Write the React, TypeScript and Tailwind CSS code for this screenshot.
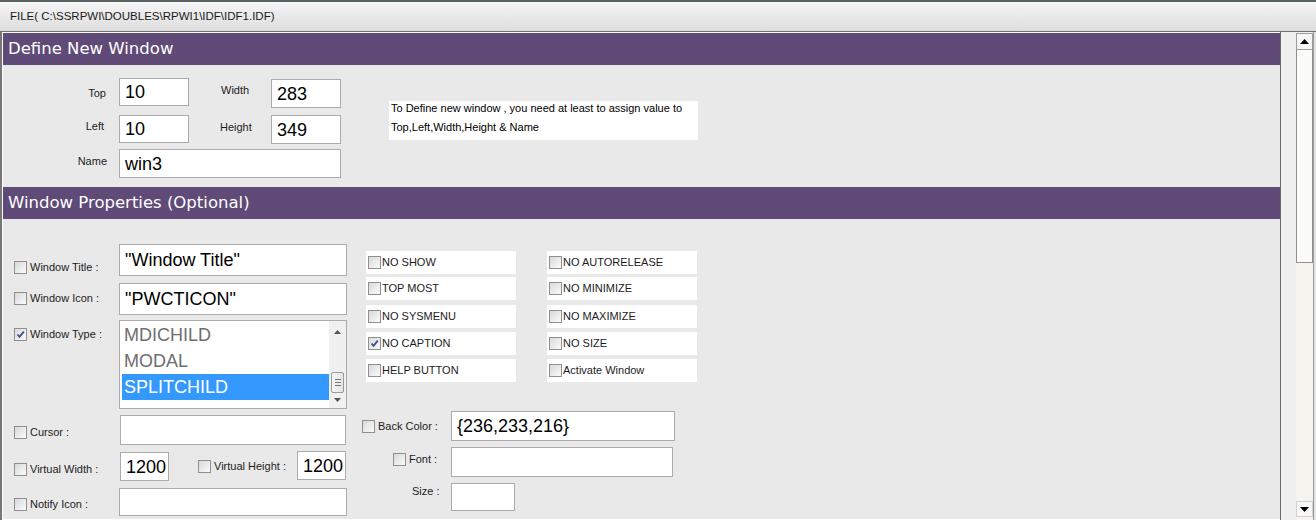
import React from 'react';

const SANS = "font-['Liberation_Sans',Arial,sans-serif]";

function Check({ checked = false }: { checked?: boolean }) {
  return (
    <span className="relative inline-block w-[13px] h-[13px] shrink-0 border border-[#8e8f8f] bg-gradient-to-br from-[#d9d9d9] to-[#fbfbfb]">
      {checked && (
        <svg viewBox="0 0 11 11" className="absolute inset-0 w-[11px] h-[11px]">
          <path d="M2.5 5.5 L4.5 7.8 L8.8 2.6" fill="none" stroke="#3f5490" strokeWidth="1.9" />
        </svg>
      )}
    </span>
  );
}

function Box({ className = '', children }: { className?: string; children?: React.ReactNode }) {
  return (
    <div className={`bg-white border border-[#ababab] flex items-center pl-[5px] text-[18px] text-black leading-none ${className}`}>
      {children}
    </div>
  );
}

function CheckLabel({ label, checked, tight = false }: { label: string; checked?: boolean; tight?: boolean }) {
  return (
    <div className={`flex items-center ${tight ? 'gap-[1px]' : 'gap-[3px]'}`}>
      <Check checked={checked} />
      <span className="text-[11px] leading-none text-[#1c1c1c]">{label}</span>
    </div>
  );
}

function Header({ title }: { title: string }) {
  return (
    <div className="h-[32px] bg-[#604a77] flex items-center pl-[5px]">
      <span className="font-['DejaVu_Sans',sans-serif] text-[16.5px] text-white leading-none">{title}</span>
    </div>
  );
}

function OptBox({ label, checked }: { label: string; checked?: boolean }) {
  return (
    <div className="w-[150px] h-[23px] bg-white flex items-center pl-[2px]">
      <CheckLabel label={label} checked={checked} tight />
    </div>
  );
}

export default function App() {
  const col1 = ['NO SHOW', 'TOP MOST', 'NO SYSMENU', 'NO CAPTION', 'HELP BUTTON'];
  const col2 = ['NO AUTORELEASE', 'NO MINIMIZE', 'NO MAXIMIZE', 'NO SIZE', 'Activate Window'];
  const gaps = ['mt-0', 'mt-[3px]', 'mt-[5px]', 'mt-[4px]', 'mt-[4px]'];

  return (
    <div className={`w-[1316px] h-[520px] overflow-hidden bg-[#e9e9e9] ${SANS}`}>
      {/* file title bar */}
      <div className="h-[2px] bg-[#596262]" />
      <div className="h-[29px] bg-gradient-to-b from-[#f5f5f5] to-[#dddddd] flex items-center pl-[10px]">
        <span className="text-[11.5px] text-[#1a1a1a] leading-none">FILE( C:\SSRPWI\DOUBLES\RPWI1\IDF\IDF1.IDF)</span>
      </div>
      <div className="h-[1px] bg-[#6f6f6f]" />

      <div className="flex h-[488px]">
        {/* form panel */}
        <div className="w-[1281px] shrink-0 border-l-2 border-l-[#777777] border-r border-r-[#6a6a6a] bg-white pt-[1px]">
          <div className="border-l border-l-white">
            <Header title="Define New Window" />

            <div className="h-[122px] bg-[#e9e9e9] flex items-start pt-[13px]">
              <div className="flex flex-col">
                <div className="flex items-start h-[28px]">
                  <div className="w-[103px] text-right text-[11px] leading-none text-[#1c1c1c] mt-[10px]">Top</div>
                  <Box className="ml-[13px] w-[70px] h-[28px]">10</Box>
                  <div className="w-[82px] pl-[32px] text-[11px] leading-none text-[#1c1c1c] mt-[7px]">Width</div>
                  <Box className="w-[70px] h-[29px] mt-[1px]">283</Box>
                </div>
                <div className="flex items-start h-[29px] mt-[9px]">
                  <div className="w-[101px] text-right text-[11px] leading-none text-[#1c1c1c] mt-[6px]">Left</div>
                  <Box className="ml-[15px] w-[70px] h-[28px]">10</Box>
                  <div className="w-[82px] pl-[31px] text-[11px] leading-none text-[#1c1c1c] mt-[7px]">Height</div>
                  <Box className="w-[70px] h-[29px]">349</Box>
                </div>
                <div className="flex items-start mt-[5px]">
                  <div className="w-[104px] text-right text-[11px] leading-none text-[#1c1c1c] mt-[7px]">Name</div>
                  <Box className="ml-[12px] w-[222px] h-[29px]">win3</Box>
                </div>
              </div>
              <div className="ml-[48px] mt-[23px] w-[309px] h-[39px] bg-white pl-[2px] text-[11px] leading-[19px] text-black">
                <div className="-mt-[2px]">To Define new window , you need at least to assign value to</div>
                <div>Top,Left,Width,Height &amp; Name</div>
              </div>
            </div>

            <Header title="Window Properties (Optional)" />

            <div className="h-[300px] bg-[#e9e9e9] flex items-start">
              {/* left column */}
              <div className="w-[357px] shrink-0 flex flex-col pt-[25px]">
                <div className="flex items-start">
                  <div className="w-[116px] pl-[11px] mt-[17px]"><CheckLabel label="Window Title :" /></div>
                  <Box className="w-[228px] h-[32px]">"Window Title"</Box>
                </div>
                <div className="flex items-start mt-[7px]">
                  <div className="w-[116px] pl-[11px] mt-[9px]"><CheckLabel label="Window Icon :" /></div>
                  <Box className="w-[228px] h-[32px]">"PWCTICON"</Box>
                </div>
                <div className="flex items-start mt-[5px]">
                  <div className="w-[116px] pl-[11px] mt-[8px]"><CheckLabel label="Window Type :" checked /></div>
                  <div className="w-[228px] h-[89px] bg-white border border-[#ababab] flex">
                    <div className="flex-1 pt-[1px] pl-[2px] text-[18px] leading-none text-[#6e6e6e]">
                      <div className="h-[26px] flex items-center pl-[2px]">MDICHILD</div>
                      <div className="h-[26px] flex items-center pl-[2px]">MODAL</div>
                      <div className="h-[26px] flex items-center pl-[2px] bg-[#3399ff] text-white">SPLITCHILD</div>
                    </div>
                    <div className="w-[17px] bg-[#f0f0f0] flex flex-col items-center">
                      <svg width="7" height="4" viewBox="0 0 7 4" className="mt-[9px]"><path d="M0 4 L3.5 0 L7 4 Z" fill="#555" /></svg>
                      <div className="mt-[38px] w-[13px] h-[21px] bg-gradient-to-r from-[#f6f6f6] to-[#e4e4e4] border border-[#9a9a9a] rounded-[2px] flex flex-col items-center justify-center gap-[2px]">
                        <div className="w-[6px] h-[1px] bg-[#777]" />
                        <div className="w-[6px] h-[1px] bg-[#777]" />
                        <div className="w-[6px] h-[1px] bg-[#777]" />
                      </div>
                      <svg width="7" height="4" viewBox="0 0 7 4" className="mt-[5px]"><path d="M0 0 L3.5 4 L7 0 Z" fill="#555" /></svg>
                    </div>
                  </div>
                </div>
                <div className="flex items-start mt-[6px]">
                  <div className="w-[117px] pl-[11px] mt-[11px]"><CheckLabel label="Cursor :" /></div>
                  <Box className="w-[226px] h-[30px]" />
                </div>
                <div className="flex items-start mt-[7px]">
                  <div className="w-[117px] pl-[11px] mt-[11px]"><CheckLabel label="Virtual Width :" /></div>
                  <Box className="w-[49px] h-[29px]">1200</Box>
                  <div className="w-[128px] pl-[29px] mt-[8px]"><CheckLabel label="Virtual Height :" /></div>
                  <Box className="w-[49px] h-[29px] -mt-[1px]">1200</Box>
                </div>
                <div className="flex items-start mt-[7px]">
                  <div className="w-[116px] pl-[11px] mt-[10px]"><CheckLabel label="Notify Icon :" /></div>
                  <Box className="w-[228px] h-[28px]" />
                </div>
              </div>

              {/* option grid and colour rows */}
              <div className="flex flex-col pt-[32px]">
                <div className="flex pl-[6px] gap-[31px]">
                  <div className="flex flex-col">
                    {col1.map((l, i) => (
                      <div key={l} className={gaps[i]}><OptBox label={l} checked={l === 'NO CAPTION'} /></div>
                    ))}
                  </div>
                  <div className="flex flex-col">
                    {col2.map((l, i) => (
                      <div key={l} className={gaps[i]}><OptBox label={l} /></div>
                    ))}
                  </div>
                </div>

                <div className="flex items-center mt-[29px]">
                  <div className="w-[91px] pl-[2px]"><CheckLabel label="Back Color :" /></div>
                  <Box className="w-[224px] h-[30px]">{'{236,233,216}'}</Box>
                </div>
                <div className="flex items-center mt-[6px]">
                  <div className="w-[91px] pl-[33px] -mt-[6px]"><CheckLabel label="Font :" /></div>
                  <Box className="w-[222px] h-[30px]" />
                </div>
                <div className="flex items-start mt-[6px]">
                  <div className="w-[91px] pl-[52px] mt-[3px] text-[11px] leading-none text-[#1c1c1c]">Size :</div>
                  <Box className="w-[64px] h-[28px]" />
                </div>
              </div>
            </div>
          </div>
        </div>

        {/* gutter */}
        <div className="w-[15px] shrink-0 bg-[#f0f0f0]" />

        {/* main scrollbar */}
        <div className="w-[17px] shrink-0 bg-[#f6f4ef] flex flex-col pt-[1px]">
          <div className="h-[17px] shrink-0 bg-[#f7f7f7] border border-[#9c9c9c] flex items-center justify-center">
            <svg width="9" height="5" viewBox="0 0 9 5"><path d="M0 5 L4.5 0 L9 5 Z" fill="#000" /></svg>
          </div>
          <div className="h-[213px] shrink-0 bg-[#fbfbfa] border-x border-b border-[#8f8f8f]" />
          <div className="flex-1" />
          <div className="h-[16px] shrink-0 mb-[3px] bg-[#f7f7f7] border border-[#d0d0d0] flex items-center justify-center">
            <svg width="9" height="5" viewBox="0 0 9 5"><path d="M0 0 L4.5 5 L9 0 Z" fill="#000" /></svg>
          </div>
        </div>
        <div className="flex-1 bg-[#e4e4e4] border-l border-l-[#9a9a9a]" />
      </div>
    </div>
  );
}
